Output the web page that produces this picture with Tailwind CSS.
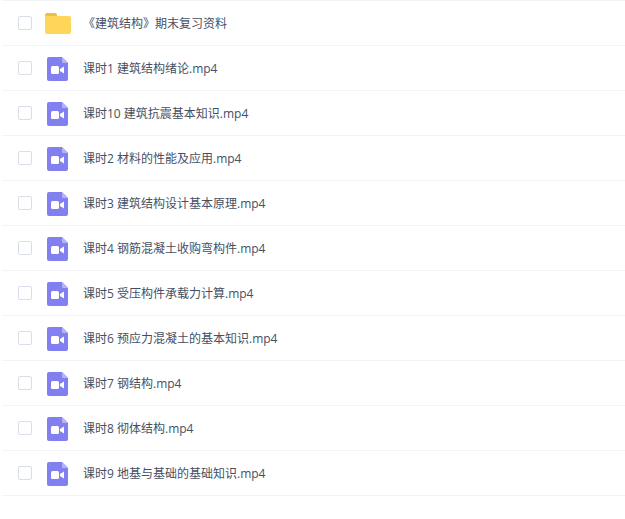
<!DOCTYPE html>
<html lang="en">
<head>
  <meta charset="UTF-8" />
  <title>文件列表</title>
  <script src="https://cdn.jsdelivr.net/npm/@tailwindcss/browser@4"></script>
</head>
<body class="bg-white h-[519px] overflow-hidden font-['Open_Sans','Noto_Sans_CJK_SC',sans-serif] text-xs text-[#454f63]">
  <svg width="0" height="0" class="absolute">
    <symbol id="video" viewBox="0 0 21 24">
      <path d="M2 0H15L21 6V22a2 2 0 0 1-2 2H2a2 2 0 0 1-2-2V2a2 2 0 0 1 2-2Z" fill="#8280f0"/>
      <path d="M15 0L21 6H16a1 1 0 0 1-1-1Z" fill="#b4b3f7"/>
      <rect x="4" y="9" width="8" height="8" rx="1.5" fill="#fff"/>
      <path d="M13 12L17 9.500V16.500L13 14Z" fill="#fff"/>
    </symbol>
  </svg>
  <div class="ml-[2px] border-t border-[#f3f4f8]">
    <!-- folder row -->
    <div class="flex items-center h-[45px] border-b border-[#f3f4f8]">
      <span class="ml-4 w-[14px] h-[14px] border border-[#d8dde9] rounded-[2px] bg-white"></span>
      <svg class="ml-[13px] w-[26px] h-[21px] mt-[1px]" viewBox="0 0 26 21">
        <path d="M0 2a2 2 0 0 1 2-2H10a2 2 0 0 1 2 2V4H0Z" fill="#f2bd45"/>
        <rect x="0" y="3" width="26" height="18" rx="2" fill="#ffd659"/>
      </svg>
      <span class="ml-3 mt-[2px]">《建筑结构》期末复习资料</span>
    </div>
    <!-- video rows -->
    <div class="flex items-center h-[45px] border-b border-[#f3f4f8]">
      <span class="ml-4 w-[14px] h-[14px] border border-[#d8dde9] rounded-[2px] bg-white"></span>
      <svg class="ml-[15px] w-[21px] h-6 mt-[2px]"><use href="#video"/></svg>
      <span class="ml-[15px] mt-[2px]">课时1 建筑结构绪论.mp4</span>
    </div>
    <div class="flex items-center h-[45px] border-b border-[#f3f4f8]">
      <span class="ml-4 w-[14px] h-[14px] border border-[#d8dde9] rounded-[2px] bg-white"></span>
      <svg class="ml-[15px] w-[21px] h-6 mt-[2px]"><use href="#video"/></svg>
      <span class="ml-[15px] mt-[2px]">课时10 建筑抗震基本知识.mp4</span>
    </div>
    <div class="flex items-center h-[45px] border-b border-[#f3f4f8]">
      <span class="ml-4 w-[14px] h-[14px] border border-[#d8dde9] rounded-[2px] bg-white"></span>
      <svg class="ml-[15px] w-[21px] h-6 mt-[2px]"><use href="#video"/></svg>
      <span class="ml-[15px] mt-[2px]">课时2 材料的性能及应用.mp4</span>
    </div>
    <div class="flex items-center h-[45px] border-b border-[#f3f4f8]">
      <span class="ml-4 w-[14px] h-[14px] border border-[#d8dde9] rounded-[2px] bg-white"></span>
      <svg class="ml-[15px] w-[21px] h-6 mt-[2px]"><use href="#video"/></svg>
      <span class="ml-[15px] mt-[2px]">课时3 建筑结构设计基本原理.mp4</span>
    </div>
    <div class="flex items-center h-[45px] border-b border-[#f3f4f8]">
      <span class="ml-4 w-[14px] h-[14px] border border-[#d8dde9] rounded-[2px] bg-white"></span>
      <svg class="ml-[15px] w-[21px] h-6 mt-[2px]"><use href="#video"/></svg>
      <span class="ml-[15px] mt-[2px]">课时4 钢筋混凝土收购弯构件.mp4</span>
    </div>
    <div class="flex items-center h-[45px] border-b border-[#f3f4f8]">
      <span class="ml-4 w-[14px] h-[14px] border border-[#d8dde9] rounded-[2px] bg-white"></span>
      <svg class="ml-[15px] w-[21px] h-6 mt-[2px]"><use href="#video"/></svg>
      <span class="ml-[15px] mt-[2px]">课时5 受压构件承载力计算.mp4</span>
    </div>
    <div class="flex items-center h-[45px] border-b border-[#f3f4f8]">
      <span class="ml-4 w-[14px] h-[14px] border border-[#d8dde9] rounded-[2px] bg-white"></span>
      <svg class="ml-[15px] w-[21px] h-6 mt-[2px]"><use href="#video"/></svg>
      <span class="ml-[15px] mt-[2px]">课时6 预应力混凝土的基本知识.mp4</span>
    </div>
    <div class="flex items-center h-[45px] border-b border-[#f3f4f8]">
      <span class="ml-4 w-[14px] h-[14px] border border-[#d8dde9] rounded-[2px] bg-white"></span>
      <svg class="ml-[15px] w-[21px] h-6 mt-[2px]"><use href="#video"/></svg>
      <span class="ml-[15px] mt-[2px]">课时7 钢结构.mp4</span>
    </div>
    <div class="flex items-center h-[45px] border-b border-[#f3f4f8]">
      <span class="ml-4 w-[14px] h-[14px] border border-[#d8dde9] rounded-[2px] bg-white"></span>
      <svg class="ml-[15px] w-[21px] h-6 mt-[2px]"><use href="#video"/></svg>
      <span class="ml-[15px] mt-[2px]">课时8 彻体结构.mp4</span>
    </div>
    <div class="flex items-center h-[45px] border-b border-[#f3f4f8]">
      <span class="ml-4 w-[14px] h-[14px] border border-[#d8dde9] rounded-[2px] bg-white"></span>
      <svg class="ml-[15px] w-[21px] h-6 mt-[2px]"><use href="#video"/></svg>
      <span class="ml-[15px] mt-[2px]">课时9 地基与基础的基础知识.mp4</span>
    </div>
  </div>
</body>
</html>
